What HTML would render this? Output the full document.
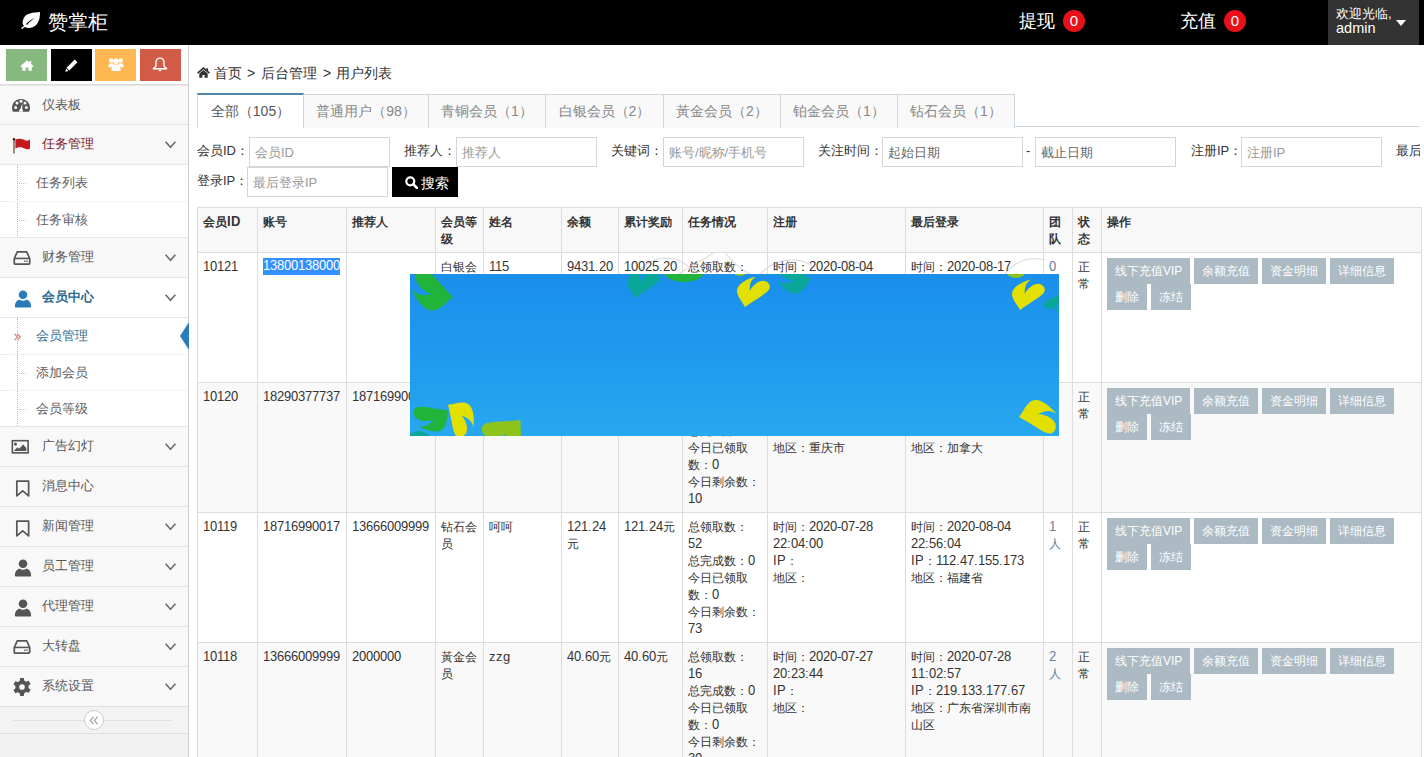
<!DOCTYPE html>
<html><head><meta charset="utf-8">
<style>
@font-face{font-family:"LSA";src:local("Liberation Sans");size-adjust:105%}
@font-face{font-family:"LSA";src:local("Liberation Sans Bold");font-weight:bold;size-adjust:105%}
*{box-sizing:border-box;margin:0;padding:0}
html,body{width:1424px;height:757px;overflow:hidden;background:#fff}
body{font-family:"Liberation Sans",sans-serif;font-size:13px;color:#333;position:relative}
.abs{position:absolute}
/* navbar */
#nav{position:absolute;left:0;top:0;width:1424px;height:45px;background:#000;color:#fff}
#logo{position:absolute;left:20px;top:0;height:45px;line-height:44px;font-size:20px;color:#fff}
#logo svg{position:absolute;left:0;top:12px}
#logo span{position:absolute;left:28px;top:0;white-space:nowrap}
.navtxt{position:absolute;top:0;line-height:42px;font-size:18px;color:#fff;white-space:nowrap}
.badge{position:absolute;top:10px;width:22px;height:22px;border-radius:11px;background:#e8101a;color:#fff;font-size:15px;line-height:22px;text-align:center}
#user{position:absolute;left:1328px;top:0;width:91px;height:45px;background:#333}
#user .t{position:absolute;left:8px;top:6px;line-height:15px;font-size:13px;color:#fff;white-space:nowrap}
#user .caret{position:absolute;left:68px;top:20px;width:0;height:0;border-left:5px solid transparent;border-right:5px solid transparent;border-top:6px solid #fff}
/* sidebar */
#side{position:absolute;left:0;top:45px;width:189px;height:712px;background:#f2f2f2;border-right:1px solid #ccc}
#shortcuts{position:absolute;left:0;top:0;width:188px;height:40px;background:#fff;border-bottom:1px solid #ddd}
.sc{position:absolute;top:4px;width:41px;height:32px}

.item{position:absolute;left:0;width:188px;height:40px;background:#f8f8f8;border-top:1px solid #e5e5e5;color:#585858;font-size:13px}
.item .ic{position:absolute;left:12px;top:11px;width:18px;height:18px}
.item .lb{position:absolute;left:42px;top:0;line-height:38px;white-space:nowrap}
.item .chev{position:absolute;left:165px;top:16px}
.sub{position:absolute;left:0;width:188px;background:#fff;border-top:1px solid #e5e5e5}
.sub .vl{position:absolute;left:17px;top:0;bottom:0;border-left:1px dotted #a9bccb}
.subi{position:absolute;left:0;width:188px;height:37px;color:#616161;font-size:13px}
.subi .lb{position:absolute;left:36px;top:0;line-height:36px;white-space:nowrap}
.subi .tk{position:absolute;left:19px;top:18px;width:7px;border-top:1px dotted #b9c4cc}
.subi .dl{position:absolute;left:0;right:0;top:-1px;border-top:1px dotted #e4e4e4}
/* main */
#crumb{position:absolute;left:197px;top:63px;line-height:20px;font-size:14px;color:#333;white-space:nowrap}
#crumb svg{position:absolute;left:0;top:5px}
#crumb span{position:absolute;top:0}
#tabs{position:absolute;left:197px;top:93px;width:1223px;height:34px;border-bottom:1px solid #cdd5dd}
.tab{position:absolute;top:1px;height:34px;border:1px solid #cdd5dd;border-bottom:none;background:#f9f9f9;color:#888;font-size:14px;line-height:33px;text-align:center;white-space:nowrap}
.tab.act{top:0;height:35px;background:#fff;color:#585858;border-top:2px solid #4f88a8}
.lbl{position:absolute;font-size:13px;color:#333;line-height:20px;white-space:nowrap}
.inp{position:absolute;height:30px;border:1px solid #d5d5d5;background:#fff;color:#999;font-size:13px;line-height:30px;padding-left:5px;white-space:nowrap;overflow:hidden}
#sbtn{position:absolute;left:392px;top:167px;width:66px;height:30px;background:#000;color:#fff;font-size:14px;line-height:30px}
/* table */
#tbl{position:absolute;left:197px;top:207px;border-collapse:collapse;table-layout:fixed;font-size:12px;line-height:17px;color:#333;font-family:"LSA","Liberation Sans",sans-serif}
#tbl td,#tbl th{border:1px solid #ddd;padding:6px 5px 4px 5px;vertical-align:top;text-align:left;word-break:break-all}
#tbl td:last-child{padding:5px}
#tbl th{background:#f8f8f8;font-weight:bold;color:#333}
#tbl tr.g td{background:#f9f9f9}
.btn{display:inline-block;height:26px;line-height:26px;padding:0 8px;background:#abbac3;color:#fff;font-size:12px;vertical-align:top;white-space:nowrap;font-family:"Liberation Sans",sans-serif}
.lk{color:#64809d}
.sel{display:inline-block;vertical-align:top;background:#3390ff;color:#fff;line-height:17px;position:relative;top:-1px}
#banner{position:absolute;left:410px;top:274px;width:649px;height:162px;background:linear-gradient(180deg,#1a8fec 0%,#1f9aee 50%,#27a8f0 100%);overflow:hidden}
</style></head><body>
<div id="nav">
  <div id="logo"><svg width="21" height="17" viewBox="0 0 21 17"><path d="M20 0C14 1 5 0 3 8c-1 3 0 5 1 6l-3 2 1 1 3-2c3 2 9 1 12-3 3-4 3-9 3-12zM6 12c3-3 6-5 9-6-3 2-6 4-8 7z" fill="#fff"/></svg><span>赞掌柜</span></div>
  <div class="navtxt" style="left:1019px">提现</div>
  <div class="badge" style="left:1063px">0</div>
  <div class="navtxt" style="left:1180px">充值</div>
  <div class="badge" style="left:1224px">0</div>
  <div id="user"><div class="t">欢迎光临,<br><span style="font-size:14.5px">admin</span></div><div class="caret"></div></div>
</div>

<div id="side">
  <div id="shortcuts">
    <div class="sc" style="left:6px;background:#87b87f"><svg style="position:absolute;left:14px;top:11px" width="14" height="11" viewBox="0 0 14 11"><path d="M7 0.3L0.3 6.2L1.2 7.2L2.2 6.3V10.8H5.6V7.5H8.4V10.8H11.8V6.3L12.8 7.2L13.7 6.2L11.2 4V1H9.6V2.6z" fill="#fff"/></svg></div>
    <div class="sc" style="left:51px;background:#000"><svg style="position:absolute;left:14px;top:10px" width="13" height="13" viewBox="0 0 14 14"><path d="M10.5 0.6L13.4 3.5L4.6 12.3L1.7 9.4z" fill="#fff"/><path d="M1.2 10.2L3.8 12.8L0.3 13.7z" fill="#fff"/></svg></div>
    <div class="sc" style="left:95px;background:#ffb752"><svg style="position:absolute;left:13px;top:8px" width="16" height="15" viewBox="0 0 17 15"><circle cx="3.4" cy="3.2" r="2.3" fill="#fff"/><circle cx="13.6" cy="3.2" r="2.3" fill="#fff"/><circle cx="8.5" cy="4" r="3" fill="#fff"/><path d="M0.4 10.5C0.4 7.5 1.3 6.2 3.4 6.2S6 7 6 7.5V10.5z" fill="#fff"/><path d="M16.6 10.5C16.6 7.5 15.7 6.2 13.6 6.2S11 7 11 7.5V10.5z" fill="#fff"/><path d="M3.6 14.4C3.6 9.6 5.2 7.6 8.5 7.6S13.4 9.6 13.4 14.4z" fill="#fff"/></svg></div>
    <div class="sc" style="left:140px;background:#d15b47"><svg style="position:absolute;left:12px;top:8px" width="16" height="15" viewBox="0 0 17 16"><path d="M8.5 1.2C5.6 1.2 4.2 3.6 4.2 6.5V9.6L1.4 12.6H15.6L12.8 9.6V6.5C12.8 3.6 11.4 1.2 8.5 1.2z" fill="none" stroke="#fff" stroke-width="1.5" stroke-linejoin="round"/><path d="M6.8 13.6C7 14.8 7.6 15.3 8.5 15.3S10 14.8 10.2 13.6z" fill="#fff"/></svg></div>
  </div>
</div>

<div class="item" style="top:85px;height:40px;"><svg class="ic" style="left:12px;top:10px" width="18" height="14" viewBox="0 0 18 14"><path d="M0.9 13.8A9 9 0 1 1 17.1 13.8Z" fill="#555"/><circle cx="3.6" cy="9.6" r="1.5" fill="#fff"/><circle cx="14.4" cy="9.6" r="1.5" fill="#fff"/><circle cx="5" cy="5" r="1.5" fill="#fff"/><circle cx="13" cy="5" r="1.5" fill="#fff"/><circle cx="9" cy="3.2" r="1.5" fill="#fff"/><path d="M7.2 13.8C6.9 12.4 7.5 11.2 8.4 10.8L10.5 5.2L10.1 11C10.9 11.6 11.2 12.6 10.8 13.8z" fill="#fff"/></svg><div class="lb" style="line-height:38px;">仪表板</div></div>
<div class="item" style="top:124px;height:40px;"><svg class="ic" style="left:12px;top:12px" width="19" height="16" viewBox="0 0 18 16"><rect x="1" y="0.5" width="2" height="15" fill="#a58a78"/><circle cx="2" cy="1.2" r="1.2" fill="#3a2020"/><path d="M3.4 1.6C6.5 0.2 9.5 0.6 12 1.8S16 3 18 1.6V10.4C16 11.8 14.4 11.4 12 10.2S6.5 8.6 3.4 10.6z" fill="#c41a1f"/></svg><div class="lb" style="line-height:38px;color:#7c2230">任务管理</div><svg class="chev" width="11" height="8" viewBox="0 0 11 8"><path d="M0.6 0.8L5.5 6.2L10.4 0.8" fill="none" stroke="#6c6c6c" stroke-width="1.6"/></svg></div>
<div class="sub" style="top:164px;height:74px"><div class="vl"></div><div class="subi" style="top:0"><div class="tk"></div><div class="lb">任务列表</div></div><div class="subi" style="top:37px"><div class="dl"></div><div class="tk"></div><div class="lb">任务审核</div></div></div>
<div class="item" style="top:237px;height:40px;"><svg class="ic" style="left:13px;top:11px" width="17" height="14" viewBox="0 0 17 14"><path d="M4 1.2h9L15.8 7.5v4.3c0 .6-.4 1-1 1H2.2c-.6 0-1-.4-1-1V7.5z" fill="none" stroke="#555" stroke-width="1.6" stroke-linejoin="round"/><path d="M1.5 7.4h14" stroke="#555" stroke-width="1.5"/><rect x="10.5" y="9.4" width="1.3" height="1.3" fill="#555"/><rect x="12.6" y="9.4" width="1.3" height="1.3" fill="#555"/></svg><div class="lb" style="line-height:38px;">财务管理</div><svg class="chev" width="11" height="8" viewBox="0 0 11 8"><path d="M0.6 0.8L5.5 6.2L10.4 0.8" fill="none" stroke="#6c6c6c" stroke-width="1.6"/></svg></div>
<div class="item" style="top:277px;height:40px;background:#fff"><svg class="ic" style="left:14px;top:12px" width="14" height="15" viewBox="0 0 15 16"><circle cx="7.5" cy="4.2" r="3.8" fill="#2a7ab8"/><path d="M0.3 14.6C0.3 10.6 2.6 8.6 4.6 8.6C5.6 9.3 6.5 9.5 7.5 9.5S9.4 9.3 10.4 8.6C12.4 8.6 14.7 10.6 14.7 14.6C14.7 15.2 14.3 15.6 13.7 15.6H1.3C0.7 15.6 0.3 15.2 0.3 14.6z" fill="#2a7ab8"/></svg><div class="lb" style="line-height:38px;color:#2d6a8e;font-weight:bold">会员中心</div><svg class="chev" width="11" height="8" viewBox="0 0 11 8"><path d="M0.6 0.8L5.5 6.2L10.4 0.8" fill="none" stroke="#6c6c6c" stroke-width="1.6"/></svg></div>
<div class="sub" style="top:317px;height:109px"><div class="vl"></div><div class="subi" style="top:0"><svg style="position:absolute;left:14px;top:15px" width="7" height="8" viewBox="0 0 7 8"><path d="M0.7 0.8L3.4 4L0.7 7.2M3.6 0.8L6.3 4L3.6 7.2" fill="none" stroke="#c98c80" stroke-width="1.3"/></svg><div class="lb" style="color:#35708f">会员管理</div><svg style="position:absolute;left:180px;top:4px" width="9" height="28" viewBox="0 0 9 28"><path d="M9 0L0 14L9 28z" fill="#2b7dbc"/></svg></div><div class="subi" style="top:37px"><div class="dl"></div><div class="tk"></div><div class="lb">添加会员</div></div><div class="subi" style="top:73px"><div class="dl"></div><div class="tk"></div><div class="lb">会员等级</div></div></div>
<div class="item" style="top:426px;height:40px;"><svg class="ic" style="left:11px;top:11px" width="21" height="16" viewBox="0 0 20 16"><rect x="1.5" y="1" width="17.5" height="13.5" fill="none" stroke="#555" stroke-width="1.8"/><circle cx="5" cy="4.8" r="1.7" fill="#555"/><path d="M3 12.5L7.2 8.2L9 10L13.5 5.3L17 9.2V12.5z" fill="#555"/></svg><div class="lb" style="line-height:38px;">广告幻灯</div><svg class="chev" width="11" height="8" viewBox="0 0 11 8"><path d="M0.6 0.8L5.5 6.2L10.4 0.8" fill="none" stroke="#6c6c6c" stroke-width="1.6"/></svg></div>
<div class="item" style="top:466px;height:40px;"><svg class="ic" style="left:14px;top:13px" width="13" height="16" viewBox="0 0 13 16"><path d="M1 1h10.5v13.2L6.25 9.6L1 14.2z" fill="none" stroke="#555" stroke-width="1.5" stroke-linejoin="round"/></svg><div class="lb" style="line-height:38px;">消息中心</div></div>
<div class="item" style="top:506px;height:40px;"><svg class="ic" style="left:14px;top:13px" width="13" height="16" viewBox="0 0 13 16"><path d="M1 1h10.5v13.2L6.25 9.6L1 14.2z" fill="none" stroke="#555" stroke-width="1.5" stroke-linejoin="round"/></svg><div class="lb" style="line-height:38px;">新闻管理</div><svg class="chev" width="11" height="8" viewBox="0 0 11 8"><path d="M0.6 0.8L5.5 6.2L10.4 0.8" fill="none" stroke="#6c6c6c" stroke-width="1.6"/></svg></div>
<div class="item" style="top:546px;height:40px;"><svg class="ic" style="left:14px;top:12px" width="15" height="15" viewBox="0 0 15 16"><circle cx="7.5" cy="4.2" r="3.8" fill="#555"/><path d="M0.3 14.6C0.3 10.6 2.6 8.6 4.6 8.6C5.6 9.3 6.5 9.5 7.5 9.5S9.4 9.3 10.4 8.6C12.4 8.6 14.7 10.6 14.7 14.6C14.7 15.2 14.3 15.6 13.7 15.6H1.3C0.7 15.6 0.3 15.2 0.3 14.6z" fill="#555"/></svg><div class="lb" style="line-height:38px;">员工管理</div><svg class="chev" width="11" height="8" viewBox="0 0 11 8"><path d="M0.6 0.8L5.5 6.2L10.4 0.8" fill="none" stroke="#6c6c6c" stroke-width="1.6"/></svg></div>
<div class="item" style="top:586px;height:40px;"><svg class="ic" style="left:14px;top:12px" width="15" height="15" viewBox="0 0 15 16"><circle cx="7.5" cy="4.2" r="3.8" fill="#555"/><path d="M0.3 14.6C0.3 10.6 2.6 8.6 4.6 8.6C5.6 9.3 6.5 9.5 7.5 9.5S9.4 9.3 10.4 8.6C12.4 8.6 14.7 10.6 14.7 14.6C14.7 15.2 14.3 15.6 13.7 15.6H1.3C0.7 15.6 0.3 15.2 0.3 14.6z" fill="#555"/></svg><div class="lb" style="line-height:38px;">代理管理</div><svg class="chev" width="11" height="8" viewBox="0 0 11 8"><path d="M0.6 0.8L5.5 6.2L10.4 0.8" fill="none" stroke="#6c6c6c" stroke-width="1.6"/></svg></div>
<div class="item" style="top:626px;height:40px;"><svg class="ic" style="left:13px;top:11px" width="17" height="14" viewBox="0 0 17 14"><path d="M4 1.2h9L15.8 7.5v4.3c0 .6-.4 1-1 1H2.2c-.6 0-1-.4-1-1V7.5z" fill="none" stroke="#555" stroke-width="1.6" stroke-linejoin="round"/><path d="M1.5 7.4h14" stroke="#555" stroke-width="1.5"/><rect x="10.5" y="9.4" width="1.3" height="1.3" fill="#555"/><rect x="12.6" y="9.4" width="1.3" height="1.3" fill="#555"/></svg><div class="lb" style="line-height:38px;">大转盘</div><svg class="chev" width="11" height="8" viewBox="0 0 11 8"><path d="M0.6 0.8L5.5 6.2L10.4 0.8" fill="none" stroke="#6c6c6c" stroke-width="1.6"/></svg></div>
<div class="item" style="top:666px;height:40px;"><svg class="ic" style="left:13px;top:11px" width="16" height="16" viewBox="0 0 16 16"><g transform="translate(8 8)"><path d="M-1.6-8h3.2l.5 2.4c.6.2 1.1.5 1.6.9l2.3-.8 1.6 2.8-1.8 1.6c.1.6.1 1.3 0 1.9l1.8 1.6-1.6 2.8-2.3-.8c-.5.4-1 .7-1.6.9L1.6 8h-3.2l-.5-2.4c-.6-.2-1.1-.5-1.6-.9l-2.3.8-1.6-2.8 1.8-1.6c-.1-.6-.1-1.3 0-1.9l-1.8-1.6 1.6-2.8 2.3.8c.5-.4 1-.7 1.6-.9z" fill="#555"/><circle r="2.5" fill="#f8f8f8"/></g></svg><div class="lb" style="line-height:38px;">系统设置</div><svg class="chev" width="11" height="8" viewBox="0 0 11 8"><path d="M0.6 0.8L5.5 6.2L10.4 0.8" fill="none" stroke="#6c6c6c" stroke-width="1.6"/></svg></div>
<div class="abs" style="left:0;top:706px;width:188px;height:28px;border-top:1px solid #e0e0e0;border-bottom:1px solid #e0e0e0;background:#f3f3f3"><div class="abs" style="left:13px;top:13px;width:159px;border-top:1px solid #e0e0e0"></div><div class="abs" style="left:84px;top:3px;width:20px;height:20px;border-radius:50%;border:1px solid #ccc;background:#fff"><svg style="position:absolute;left:4px;top:5px" width="10" height="9" viewBox="0 0 10 9"><path d="M4.6 0.8L1.3 4.5L4.6 8.2M8.6 0.8L5.3 4.5L8.6 8.2" fill="none" stroke="#aaa" stroke-width="1.3"/></svg></div></div>

<div id="crumb"><svg style="position:absolute;left:0px;top:4px" width="13" height="11" viewBox="0 0 13 11"><path d="M0.6 6.2L6.5 1.2L12.4 6.2" fill="none" stroke="#333" stroke-width="1.7"/><path d="M9.3 1.2h1.8v3.6l-1.8-1.5z" fill="#333"/><path d="M2.3 6.4L6.5 2.9L10.7 6.4V10.8H7.6V8H5.4V10.8H2.3z" fill="#333"/></svg><span style="left:17px">首页</span><span style="left:50px">&gt;</span><span style="left:64px">后台管理</span><span style="left:126px">&gt;</span><span style="left:139px">用户列表</span></div>

<div id="tabs">
  <div class="tab act" style="left:0;width:107px">全部（105）</div>
  <div class="tab" style="left:106px;width:126px">普通用户（98）</div>
  <div class="tab" style="left:231px;width:118px">青铜会员（1）</div>
  <div class="tab" style="left:348px;width:119px">白银会员（2）</div>
  <div class="tab" style="left:466px;width:118px">黃金会员（2）</div>
  <div class="tab" style="left:583px;width:118px">铂金会员（1）</div>
  <div class="tab" style="left:700px;width:118px">钻石会员（1）</div>
</div>


<div class="lbl" style="left:197px;top:141px">会员ID：</div>
<div class="inp" style="left:249px;top:137px;width:141px">会员ID</div>
<div class="lbl" style="left:404px;top:141px">推荐人：</div>
<div class="inp" style="left:456px;top:137px;width:141px">推荐人</div>
<div class="lbl" style="left:611px;top:141px">关键词：</div>
<div class="inp" style="left:663px;top:137px;width:141px">账号/昵称/手机号</div>
<div class="lbl" style="left:818px;top:141px">关注时间：</div>
<div class="inp" style="left:882px;top:137px;width:141px;color:#666">起始日期</div>
<div class="lbl" style="left:1026px;top:141px">-</div>
<div class="inp" style="left:1035px;top:137px;width:141px;color:#666">截止日期</div>
<div class="lbl" style="left:1191px;top:141px">注册IP：</div>
<div class="inp" style="left:1241px;top:137px;width:141px">注册IP</div>
<div class="lbl" style="left:1396px;top:141px">最后</div>
<div class="abs" style="left:1420px;top:130px;width:4px;height:40px;background:#fff"></div>
<div class="lbl" style="left:197px;top:171px">登录IP：</div>
<div class="inp" style="left:247px;top:167px;width:141px">最后登录IP</div>
<div id="sbtn"><svg style="position:absolute;left:13px;top:9px" width="13" height="13" viewBox="0 0 13 13"><circle cx="5.3" cy="5.3" r="4" fill="none" stroke="#fff" stroke-width="2.2"/><path d="M8.2 8.2L12 12" stroke="#fff" stroke-width="2.6" stroke-linecap="round"/></svg><span style="position:absolute;left:29px;top:1px">搜索</span></div>
<svg class="abs" style="left:600px;top:236px" width="460" height="40" viewBox="0 0 460 40"><path d="M40 34C55 18 78 18 92 34M79 38C92 28 112 20 121 11C130 24 138 32 150 38M160 38C175 22 198 20 212 30M232 30C245 22 262 24 268 36M405 38C415 25 430 20 445 24" fill="none" stroke="#e2e2e2" stroke-width="1.4"/></svg>
<table id="tbl"><colgroup><col style="width:60px"><col style="width:89px"><col style="width:89px"><col style="width:48px"><col style="width:78px"><col style="width:57px"><col style="width:64px"><col style="width:85px"><col style="width:138px"><col style="width:138px"><col style="width:29px"><col style="width:29px"><col style="width:320px"></colgroup><tr><th>会员ID</th><th>账号</th><th>推荐人</th><th>会员等级</th><th>姓名</th><th>余额</th><th>累计奖励</th><th>任务情况</th><th>注册</th><th>最后登录</th><th>团队</th><th>状态</th><th>操作</th></tr><tr class=""><td>10121</td><td><span class="sel">13800138000</span></td><td></td><td>白银会员</td><td>115</td><td>9431.20</td><td>10025.20</td><td>总领取数：<br>0<br>总完成数：0<br>今日已领取<br>数：0<br>今日剩余数：<br>10</td><td>时间：2020-08-04<br>10:11:11<br>IP：<br>地区：</td><td>时间：2020-08-17<br>10:11:11<br>IP：<br>地区：</td><td><span class="lk">0</span></td><td>正常</td><td><span class="btn">线下充值VIP</span> <span class="btn">余额充值</span> <span class="btn">资金明细</span> <span class="btn">详细信息</span> <span class="btn">删除</span> <span class="btn">冻结</span></td></tr><tr class="g"><td>10120</td><td>18290377737</td><td>18716990017</td><td>白银会员</td><td>小明</td><td>0.00</td><td>0.00</td><td>总领取数：<br>0<br>总完成数：0<br>今日已领取<br>数：0<br>今日剩余数：<br>10</td><td>时间：2020-08-04<br>10:11:11<br>IP：183.228.11.xx<br>地区：重庆市</td><td>时间：2020-08-17<br>10:11:11<br>IP：96.52.103.139<br>地区：加拿大</td><td><span class="lk">0</span></td><td>正常</td><td><span class="btn">线下充值VIP</span> <span class="btn">余额充值</span> <span class="btn">资金明细</span> <span class="btn">详细信息</span> <span class="btn">删除</span> <span class="btn">冻结</span></td></tr><tr class=""><td>10119</td><td>18716990017</td><td>13666009999</td><td>钻石会员</td><td>呵呵</td><td>121.24元</td><td>121.24元</td><td>总领取数：<br>52<br>总完成数：0<br>今日已领取<br>数：0<br>今日剩余数：<br>73</td><td>时间：2020-07-28<br>22:04:00<br>IP：<br>地区：</td><td>时间：2020-08-04<br>22:56:04<br>IP：112.47.155.173<br>地区：福建省</td><td><span class="lk">1<br>人</span></td><td>正常</td><td><span class="btn">线下充值VIP</span> <span class="btn">余额充值</span> <span class="btn">资金明细</span> <span class="btn">详细信息</span> <span class="btn">删除</span> <span class="btn">冻结</span></td></tr><tr class="g"><td>10118</td><td>13666009999</td><td>2000000</td><td>黃金会员</td><td>zzg</td><td>40.60元</td><td>40.60元</td><td>总领取数：<br>16<br>总完成数：0<br>今日已领取<br>数：0<br>今日剩余数：<br>30</td><td>时间：2020-07-27<br>20:23:44<br>IP：<br>地区：</td><td>时间：2020-07-28<br>11:02:57<br>IP：219.133.177.67<br>地区：广东省深圳市南山区</td><td><span class="lk">2<br>人</span></td><td>正常</td><td><span class="btn">线下充值VIP</span> <span class="btn">余额充值</span> <span class="btn">资金明细</span> <span class="btn">详细信息</span> <span class="btn">删除</span> <span class="btn">冻结</span></td></tr></table>

<div id="banner"><svg width="649" height="162" viewBox="0 0 649 162" style="position:absolute;left:0;top:0"><path transform="translate(43 23) rotate(261) scale(1.3)" d="M0 0C-3-6-8.5-11-7.9-17C-7-23 1-28 11.3-30.5C7-28 4.5-25 4.7-16C8-22 13-26 18.3-26.2C22-26 25.5-23 24.6-19C23.5-14 12-9 0 0Z" fill="#22b33b"/><path transform="translate(225 24) rotate(0) scale(1.0)" d="M0 0C-3-6-8.5-11-7.9-17C-7-23 1-28 11.3-30.5C7-28 4.5-25 4.7-16C8-22 13-26 18.3-26.2C22-26 25.5-23 24.6-19C23.5-14 12-9 0 0Z" fill="#0aa69a"/><ellipse cx="274" cy="-4" rx="21" ry="12" fill="#22b33b"/><ellipse cx="330" cy="-3" rx="7" ry="5" fill="#8dc41b"/><path transform="translate(335 33) rotate(0) scale(1.0)" d="M0 0C-3-6-8.5-11-7.9-17C-7-23 1-28 11.3-30.5C7-28 4.5-25 4.7-16C8-22 13-26 18.3-26.2C22-26 25.5-23 24.6-19C23.5-14 12-9 0 0Z" fill="#e1e000"/><path transform="translate(401 5) rotate(248) scale(1.05)" d="M0 0C-3-6-8.5-11-7.9-17C-7-23 1-28 11.3-30.5C7-28 4.5-25 4.7-16C8-22 13-26 18.3-26.2C22-26 25.5-23 24.6-19C23.5-14 12-9 0 0Z" fill="#0aa69a"/><ellipse cx="606" cy="-2" rx="9" ry="6" fill="#8dc41b"/><path transform="translate(610 36) rotate(0) scale(1.0)" d="M0 0C-3-6-8.5-11-7.9-17C-7-23 1-28 11.3-30.5C7-28 4.5-25 4.7-16C8-22 13-26 18.3-26.2C22-26 25.5-23 24.6-19C23.5-14 12-9 0 0Z" fill="#e1e000"/><path transform="translate(655 18) rotate(190) scale(0.75)" d="M0 0C-3-6-8.5-11-7.9-17C-7-23 1-28 11.3-30.5C7-28 4.5-25 4.7-16C8-22 13-26 18.3-26.2C22-26 25.5-23 24.6-19C23.5-14 12-9 0 0Z" fill="#0aa69a"/><path transform="translate(609 143) rotate(65) scale(1.15)" d="M0 0C-3-6-8.5-11-7.9-17C-7-23 1-28 11.3-30.5C7-28 4.5-25 4.7-16C8-22 13-26 18.3-26.2C22-26 25.5-23 24.6-19C23.5-14 12-9 0 0Z" fill="#e1e000"/><path transform="translate(38.5 136.4) rotate(222) scale(1.05)" d="M0 0C-3-6-8.5-11-7.9-17C-7-23 1-28 11.3-30.5C7-28 4.5-25 4.7-16C8-22 13-26 18.3-26.2C22-26 25.5-23 24.6-19C23.5-14 12-9 0 0Z" fill="#22b33b"/><path transform="translate(38 130.7) rotate(112) scale(1.05)" d="M0 0C-3-6-8.5-11-7.9-17C-7-23 1-28 11.3-30.5C7-28 4.5-25 4.7-16C8-22 13-26 18.3-26.2C22-26 25.5-23 24.6-19C23.5-14 12-9 0 0Z" fill="#e1e000"/><path transform="translate(110.5 146) rotate(210) scale(1.2)" d="M0 0C-3-6-8.5-11-7.9-17C-7-23 1-28 11.3-30.5C7-28 4.5-25 4.7-16C8-22 13-26 18.3-26.2C22-26 25.5-23 24.6-19C23.5-14 12-9 0 0Z" fill="#8dc41b"/><ellipse cx="9" cy="166" rx="12" ry="9" fill="#0aa69a"/></svg></div>
</body></html>
